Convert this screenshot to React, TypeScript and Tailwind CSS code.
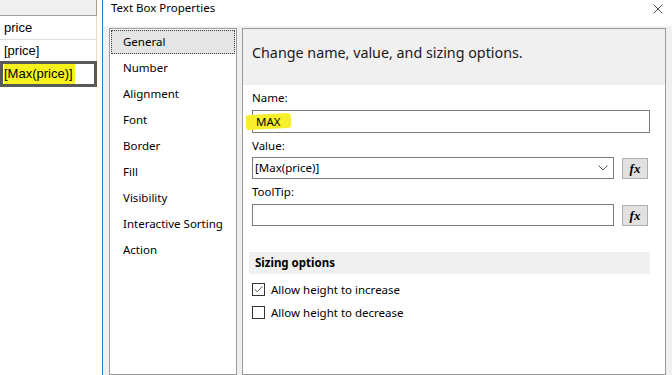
import { Check, X } from "lucide-react";

const navItems = [
  "General",
  "Number",
  "Alignment",
  "Font",
  "Border",
  "Fill",
  "Visibility",
  "Interactive Sorting",
  "Action",
];

function FxButton() {
  return (
    <div className="w-[26px] h-[21px] bg-[#e1e1e1] border border-[#adadad] flex items-center justify-center">
      <span className="text-[13px] font-bold italic leading-none text-black" style={{ fontFamily: '"Liberation Serif", serif' }}>
        fx
      </span>
    </div>
  );
}

export default function App() {
  return (
    <div
      className="w-[672px] h-[375px] flex overflow-hidden bg-white text-[11.5px] text-black"
      style={{ fontFamily: '"Noto Sans", sans-serif' }}
    >
      {/* report table behind the dialog */}
      <div className="w-[102px] shrink-0 flex flex-col" style={{ fontFamily: '"Liberation Sans", sans-serif' }}>
        <div className="w-[97px] h-[16px] bg-[#f0f0f0] border-b border-r border-[#a0a0a0]" />
        <div className="w-[97px] h-[24px] border-b border-r border-[#dcdcdc] flex items-center pl-[4px] text-[13px]">
          price
        </div>
        <div className="w-[97px] h-[21px] border-r border-[#dcdcdc] flex items-center pl-[4px] text-[13px]">
          [price]
        </div>
        <div className="w-[97px] h-[26px] border-[3px] border-[#595959] flex items-center pl-[1px] text-[13px]">
          <span className="bg-[#f7f21c] pr-[2px]">[Max(price)]</span>
        </div>
      </div>

      {/* dialog */}
      <div className="flex-1 flex flex-col border-l border-[#2b79c2]">
        <div className="h-[26px] shrink-0 bg-white flex items-center justify-between pl-[8px] pr-[6px]">
          <span className="-mt-[11px]">Text Box Properties</span>
          <X className="w-[16px] h-[16px] -mt-[8px] text-[#222]" strokeWidth={1.2} />
        </div>
        <div className="flex-1 bg-[#f0f0f0] flex gap-[5px] pl-[6px] pt-[2px]">
          {/* navigation list */}
          <div className="w-[128px] bg-white border border-[#9a9a9a] p-[1px] flex flex-col">
            {navItems.map((item, i) => (
              <div
                key={item}
                className={`shrink-0 flex items-center ${
                  i === 0
                    ? "h-[24px] mb-[1px] bg-[#e5e5e5] border border-dotted border-[#333] pl-[11px]"
                    : "h-[26px] pl-[12px]"
                }`}
              >
                {item}
              </div>
            ))}
          </div>

          {/* page */}
          <div className="w-[424px] bg-white border border-[#9a9a9a] flex flex-col">
            <div className="h-[56px] bg-[#f0f0f0] flex items-start pt-[13px] pl-[9px] text-[14.3px] text-[#1a1a1a]">
              Change name, value, and sizing options.
            </div>
            <div className="flex flex-col pl-[9px] pr-[15px] pt-[7px]">
              <div className="h-[12px] leading-[12px]">Name:</div>
              <div className="relative mt-[6px] h-[23px] border border-[#7a7a7a] flex items-center pl-[3px]">
                <span className="absolute left-[-7px] top-[3px] w-[45px] h-[15px] bg-[#f7ef2a] -rotate-3 rounded-[3px]" />
                <span className="relative">MAX</span>
              </div>
              <div className="mt-[7px] h-[12px] leading-[12px]">Value:</div>
              <div className="mt-[5px] flex items-center gap-[8px]">
                <div className="w-[362px] h-[22px] border border-[#7a7a7a] flex items-center justify-between pl-[2px] pr-[5px]">
                  <span>[Max(price)]</span>
                  <svg width="10" height="6" viewBox="0 0 10 6" className="text-[#555]">
                    <path d="M0.5 0.5 L5 5 L9.5 0.5" fill="none" stroke="currentColor" strokeWidth="1" />
                  </svg>
                </div>
                <FxButton />
              </div>
              <div className="mt-[7px] h-[12px] leading-[12px]">ToolTip:</div>
              <div className="mt-[6px] flex items-center gap-[8px]">
                <div className="w-[362px] h-[22px] border border-[#7a7a7a]" />
                <FxButton />
              </div>
            </div>
            <div className="mt-[26px] ml-[6px] mr-[15px] h-[22px] bg-[#f0f0f0] flex items-center pl-[6px] font-bold">
              Sizing options
            </div>
            <div className="flex flex-col gap-[6px] pl-[9px] mt-[7px]">
              <div className="flex items-center gap-[6px] h-[17px]">
                <div className="w-[13px] h-[13px] border border-[#333] flex items-center justify-center">
                  <Check className="w-[11px] h-[11px] text-[#333]" strokeWidth={1.8} />
                </div>
                <span>Allow height to increase</span>
              </div>
              <div className="flex items-center gap-[6px] h-[17px]">
                <div className="w-[13px] h-[13px] border border-[#333]" />
                <span>Allow height to decrease</span>
              </div>
            </div>
          </div>
        </div>
      </div>
    </div>
  );
}
